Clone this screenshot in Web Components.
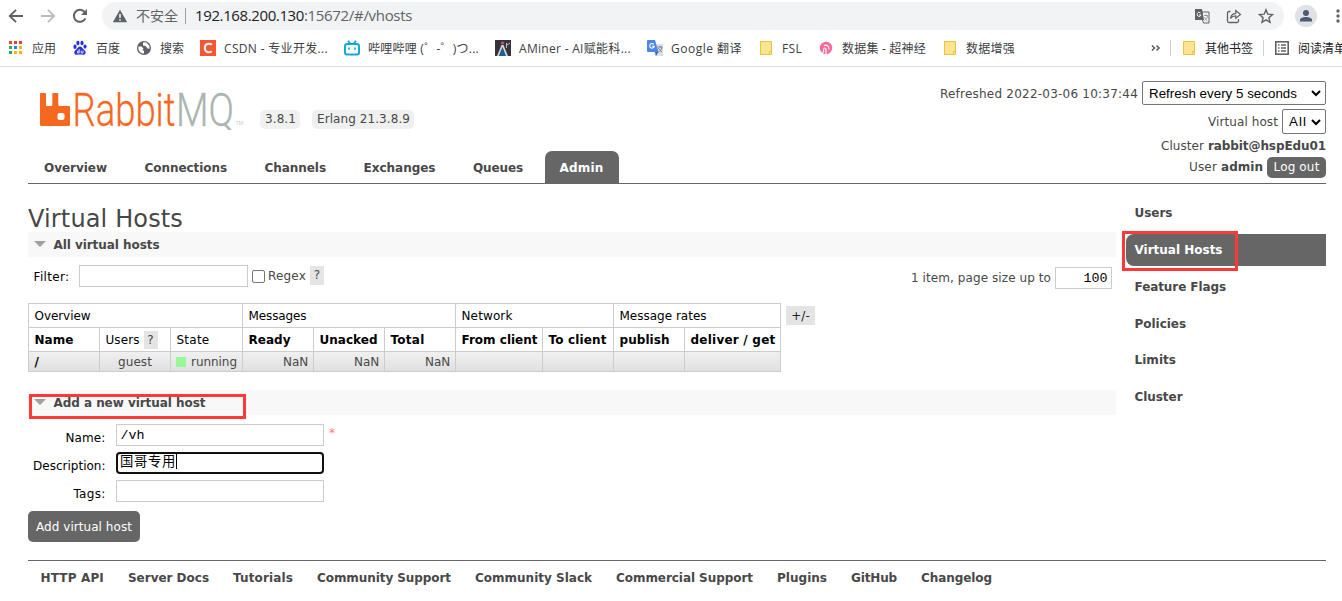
<!DOCTYPE html>
<html lang="zh-CN">
<head>
<meta charset="utf-8">
<title>RabbitMQ Management</title>
<style>
  html, body { margin: 0; padding: 0; }
  body {
    width: 1342px;
    height: 601px;
    overflow: hidden;
    background: #fff;
    color: #484848;
    font: 12px/16px "DejaVu Sans", "Noto Sans CJK SC", sans-serif;
  }
</style>
</head>
<body>
<browser-bar></browser-bar>
<rabbit-header></rabbit-header>
<rabbit-page></rabbit-page>
<rabbit-footer></rabbit-footer>

<script>
const icons = {
  back: '<path d="M15 8H2M8 1.8 1.8 8 8 14.2" fill="none" stroke="#5f6368" stroke-width="1.9"/>',
  forward: '<path d="M1 8h13M8 1.8 14.2 8 8 14.2" fill="none" stroke="#babcbe" stroke-width="1.9"/>',
  reload: '<path d="M13.4 10.3A6 6 0 1 1 12.6 4" fill="none" stroke="#5f6368" stroke-width="2"/><path d="M15 1v6H9z" fill="#5f6368"/>',
  warning: '<path d="M8 1.7 15.2 14.3H.8z" fill="#5f6368"/><path d="M7.2 6h1.6v4H7.2zM7.2 11.2h1.6v1.5H7.2z" fill="#f1f3f4"/>',
  apps: '<path d="M1 1h3v3H1zM6 1h3v3H6zM11 1h3v3h-3z" fill="#ea4335"/><path d="M1 6h3v3H1zM1 11h3v3H1z" fill="#34a853"/><path d="M6 6h3v3H6z" fill="#1a86f0"/><path d="M11 6h3v3h-3zM6 11h3v3H6zM11 11h3v3h-3z" fill="#fbb30b"/>',
  baidu: '<g fill="#2932e1"><ellipse cx="3" cy="6.8" rx="1.6" ry="2.2"/><ellipse cx="5.9" cy="3" rx="1.6" ry="2.2"/><ellipse cx="10" cy="3" rx="1.6" ry="2.2"/><ellipse cx="13" cy="6.6" rx="1.6" ry="2.1"/><path d="M8 6.5c2 0 2.5 2 4 3.2 3 2.4 1.5 5.3-1 5-2-.3-4-.3-6 0-2.6.3-4-2.7-1-5C5.500 8.500 6 6.500 8 6.500z"/></g><path d="M7.200 9v4H5.500v-2h1.700M9.200 10.500V13H11v-2.500" fill="none" stroke="#fff" stroke-width=".8"/>',
  globe: '<circle cx="8" cy="8" r="7" fill="#5f6368"/><path d="M2.5 6.500h3l2 2-1 1.500 1.500 1v2.600C4 13.500 1.800 10 2.500 6.500zM7 2.500l3-.2 3.400 3.500.2 3-2-.3-2-2.500-2.600-.5z" fill="#fff"/>',
  csdn: '<path d="M0 0h16v16H0z" fill="#fc5531"/><path d="M12 4.800C9 2.500 4.800 4 4.800 8s4 5.500 7 3.200" fill="none" stroke="#fff" stroke-width="2"/>',
  bili: '<path d="m4 .8 2.200 2.700M12 .8 9.800 3.500" stroke="#10a9dc" stroke-width="1.900"/><rect x="1" y="4" width="14" height="10.500" rx="2" fill="#fff" stroke="#10a9dc" stroke-width="2"/><path d="M5 7.500v2.200M11 7.500v2.200" stroke="#10a9dc" stroke-width="1.600"/>',
  aminer: '<path d="M0 0h16v16H0z" fill="#373435"/><path d="m2 16 4.500-11h2L13 16h-2.200L7.500 7 4 16z" fill="#c8d7e3"/><path d="m7.500 8 3 8h-6z" fill="#1661a4"/><circle cx="7.500" cy="3" r="1.500" fill="#db4b87"/><path d="M11.500 8V3M12 5l3-2" stroke="#bbb"/>',
  translate: '<path d="M5 4h11v12H8z" fill="#dcdfe2"/><path d="M1 0h7l3.500 12H1a1 1 0 0 1-1-1V1a1 1 0 0 1 1-1z" fill="#4a86e8"/><path d="m8 12 3.500 0L9 16z" fill="#3367c7"/><path d="M6.800 4.300A2.300 2.300 0 1 0 7.300 6.200H5" fill="none" stroke="#fff" stroke-width="1.100"/><path d="M10.500 7h5M13 6v1M15 7c-.5 3-2 4-3.500 5M11.500 8c1 2 2 3 3.500 4" fill="none" stroke="#777f88"/>',
  folder: '<path d="M2.500 1.500h11v13h-11z" fill="#ffe58f" stroke="#e9c341"/><path d="M11.500 14.500v-3h2" fill="none" stroke="#e9c341"/>',
  hyper: '<circle cx="8" cy="8" r="6.200" fill="#ff6b98"/><path d="M4.500 13c2-1 .5-3 1.500-4.500S8.500 9 8 11v4M6 5.500c2.500-1 5 .5 5 4" stroke="#fff" fill="none" stroke-width="1.100"/>',
  gtrans: '<path d="M1 1h7l2 11H1z" fill="#5f6368"/><path d="M8 4h7v11H9.500l-1-3" fill="none" stroke="#5f6368"/><path d="M6.500 5A2 2 0 1 0 7 7H5" fill="none" stroke="#fff" stroke-width=".9"/><path d="M10 7.500h4M12 6.500v1M13.500 8c0 2-1.500 3.500-3 4.500M10.500 9c1 2 1.500 2.500 3 3.500" fill="none" stroke="#8d9196" stroke-width=".9"/>',
  share: '<path d="M4.500 3.500H3a1.500 1.500 0 0 0-1.500 1.500v8A1.500 1.500 0 0 0 3 14.500h8a1.500 1.500 0 0 0 1.500-1.500v-2" fill="none" stroke="#5f6368" stroke-width="1.300"/><path d="M4.500 10.500C5 7 7 5.500 9.800 5.300V2.600L14.500 6.500 9.800 10.300V7.800C7.500 7.800 6 8.500 4.500 10.500z" fill="none" stroke="#5f6368" stroke-width="1.200"/>',
  star: '<path d="m8 1.800 1.800 4.400 4.700.4-3.600 3.100 1.100 4.600L8 11.800l-4 2.500 1.100-4.600-3.600-3.100 4.700-.4z" fill="none" stroke="#5f6368" stroke-width="1.400"/>',
  list: '<rect x="1.800" y="1.800" width="12.400" height="12.400" fill="none" stroke="#5f6368" stroke-width="1.600"/><path d="M4 5h1.500M4 8h1.500M4 11h1.500M7 5h5M7 8h5M7 11h5" stroke="#5f6368" stroke-width="1.300"/>',
  more: '<path d="M2.500 5.500 5 8l-2.500 2.500M7 5.500 9.500 8 7 10.500" fill="none" stroke="#5f6368" stroke-width="1.700" transform="translate(1.500)"/>'
};

class UiIcon extends HTMLElement {
  connectedCallback() {
    this.attachShadow({mode: 'open'}).innerHTML = `
      <style>
        :host { display: block; flex: none; width: 16px; height: 16px; }
        svg { display: block; width: 100%; height: 100%; }
      </style>
      <svg viewBox="0 0 16 16">${icons[this.getAttribute('name')]}</svg>`;
  }
}
customElements.define('ui-icon', UiIcon);

// Single line of text spaced out to the width given in the w attribute
class FitText extends HTMLElement {
  connectedCallback() {
    if (!this.shadowRoot) {
      this.attachShadow({mode: 'open'}).innerHTML = `
        <style>
          :host { display: inline-block; white-space: nowrap; flex: none; }
        </style>
        <slot></slot>`;
    }
    const w = parseFloat(this.getAttribute('w'));
    const n = [...this.textContent].length;
    const natural = this.getBoundingClientRect().width;
    this.style.letterSpacing = (w - natural) / n + 'px';
    this.style.width = w + 'px';
  }
}
customElements.define('fit-text', FitText);

class BookmarkItem extends HTMLElement {
  connectedCallback() {
    this.attachShadow({mode: 'open'}).innerHTML = `
      <style>
        :host { display: flex; align-items: center; gap: 8px; flex: none; }
        ::slotted(fit-text) { padding-top: 1px; }
      </style>
      <ui-icon name="${this.getAttribute('icon')}"></ui-icon>
      <slot></slot>`;
  }
}
customElements.define('bookmark-item', BookmarkItem);

class BrowserBar extends HTMLElement {
  connectedCallback() {
    this.attachShadow({mode: 'open'}).innerHTML = `
      <style>
        :host {
          display: block;
          height: 66px;
          overflow: hidden;
          border-bottom: 1px solid #dadce0;
          color: #3c4043;
          font: 12px/18px "Open Sans", "Noto Sans CJK SC", sans-serif;
        }
        .toolbar { display: flex; align-items: center; height: 32px; padding-left: 8px; width: 1334px; }
        .toolbar > ui-icon { margin-right: 16px; }
        .omnibox {
          display: flex;
          align-items: center;
          box-sizing: border-box;
          width: 1182px;
          height: 28px;
          margin-left: -2px;
          padding: 0 10px;
          border-radius: 14px;
          background: #f1f3f4;
          font-size: 15px;
          color: #5f6368;
        }
        .warn { font-size: 14px; margin-left: 8px; }
        .line { width: 1px; height: 16px; background: #9aa0a6; margin: 0 9px 0 7px; }
        .url { display: flex; padding-bottom: 2px; }
        .host { color: #202124; }
        .tools { display: flex; gap: 16px; margin-left: auto; }
        .avatar { width: 22px; height: 22px; flex: none; margin-left: 11px; }
        .dots { width: 4px; height: 14px; flex: none; margin-left: 19px; }
        .bookmarks { display: flex; align-items: center; gap: 16px; height: 32px; padding-left: 8px; width: 1342px; }
        .rest { display: flex; align-items: center; margin-left: 133px; color: #202124; }
        .sep { width: 1px; height: 16px; background: #cdd0d4; }
      </style>
      <div class="toolbar">
        <ui-icon name="back"></ui-icon>
        <ui-icon name="forward"></ui-icon>
        <ui-icon name="reload"></ui-icon>
        <div class="omnibox">
          <ui-icon name="warning"></ui-icon>
          <fit-text class="warn" w="42">不安全</fit-text>
          <span class="line"></span>
          <div class="url"><fit-text class="host" w="109">192.168.200.130</fit-text><fit-text w="108">:15672/#/vhosts</fit-text></div>
          <div class="tools">
            <ui-icon name="gtrans"></ui-icon>
            <ui-icon name="share"></ui-icon>
            <ui-icon name="star"></ui-icon>
          </div>
        </div>
        <svg class="avatar" viewBox="0 0 22 22"><circle cx="11" cy="11" r="11" fill="#dee1e6"/><circle cx="11" cy="8" r="3" fill="#4d5a72"/><path d="M5 16.500v-1.500c0-2 3-3 6-3s6 1 6 3v1.500z" fill="#4d5a72"/></svg>
        <svg class="dots" viewBox="0 0 4 14"><g fill="#5f6368"><circle cx="2" cy="2" r="1.700"/><circle cx="2" cy="7" r="1.700"/><circle cx="2" cy="12" r="1.700"/></g></svg>
      </div>
      <div class="bookmarks">
        <bookmark-item icon="apps"><fit-text w="24">应用</fit-text></bookmark-item>
        <bookmark-item icon="baidu"><fit-text w="24">百度</fit-text></bookmark-item>
        <bookmark-item icon="globe"><fit-text w="24">搜索</fit-text></bookmark-item>
        <bookmark-item icon="csdn"><fit-text w="104">CSDN - 专业开发...</fit-text></bookmark-item>
        <bookmark-item icon="bili"><fit-text w="111">哔哩哔哩 (゜-゜)つ...</fit-text></bookmark-item>
        <bookmark-item icon="aminer"><fit-text w="112">AMiner - AI赋能科...</fit-text></bookmark-item>
        <bookmark-item icon="translate"><fit-text w="71">Google 翻译</fit-text></bookmark-item>
        <bookmark-item icon="folder"><fit-text w="20">FSL</fit-text></bookmark-item>
        <bookmark-item icon="hyper"><fit-text w="84">数据集 - 超神经</fit-text></bookmark-item>
        <bookmark-item icon="folder"><fit-text w="49">数据增强</fit-text></bookmark-item>
        <div class="rest">
          <ui-icon name="more" style="margin-left:-16px"></ui-icon>
          <span class="sep" style="margin:0 10px 0 6px"></span>
          <bookmark-item icon="folder"><fit-text w="48">其他书签</fit-text></bookmark-item>
          <span class="sep" style="margin:0 10px"></span>
          <bookmark-item icon="list"><fit-text w="48">阅读清单</fit-text></bookmark-item>
        </div>
      </div>`;
  }
}
customElements.define('browser-bar', BrowserBar);

class RabbitLogo extends HTMLElement {
  connectedCallback() {
    this.attachShadow({mode: 'open'}).innerHTML = `
      <style>
        :host { display: block; width: 204px; height: 38px; }
        svg { display: block; font-family: Roboto, sans-serif; font-weight: 300; }
      </style>
      <svg width="204" height="38" viewBox="0 0 204 38">
        <path fill="#f66820" fill-rule="evenodd" d="M1 1h4q1 0 1 1v11q0 1 1 1h4.300q1 0 1-1V2q0-1 1-1h4q1 0 1 1v11q0 1 1 1H29q1 0 1 1v17.500q0 1.500-1.500 1.500h-27Q0 34 0 32.500V2q0-1 1-1zM19.500 21q-2 0-2 2v3q0 2 2 2h3q2 0 2-2v-3q0-2-2-2z"/>
        <text x="32.500" y="33.500" font-size="46" textLength="103" lengthAdjust="spacingAndGlyphs" fill="#f66820" stroke="#f66820" stroke-width=".3">Rabbit</text>
        <text x="136" y="33.500" font-size="46" textLength="58" lengthAdjust="spacingAndGlyphs" fill="#a9b5b0" stroke="#a9b5b0" stroke-width=".3">MQ</text>
        <text x="195.500" y="33" font-size="5.500" textLength="8" lengthAdjust="spacingAndGlyphs" fill="#a9b5b0">TM</text>
      </svg>`;
  }
}
customElements.define('rabbit-logo', RabbitLogo);

class SelectBox extends HTMLElement {
  connectedCallback() {
    this.attachShadow({mode: 'open'}).innerHTML = `
      <style>
        :host {
          display: flex;
          align-items: center;
          justify-content: space-between;
          box-sizing: border-box;
          padding: 0 4px 0 6px;
          border: 1px solid #767676;
          border-radius: 2px;
          background: #fff;
          color: #000;
          font: 13.33px/16px "Liberation Sans", Arial, sans-serif;
        }
        ::slotted(fit-text) { padding-top: 1px; }
      </style>
      <slot></slot>
      <svg width="10" height="8" viewBox="0 0 10 8"><path d="M1 2l4 4 4-4" fill="none" stroke="#000" stroke-width="2"/></svg>`;
  }
}
customElements.define('select-box', SelectBox);

class RabbitHeader extends HTMLElement {
  connectedCallback() {
    this.attachShadow({mode: 'open'}).innerHTML = `
      <style>
        :host {
          display: flex;
          justify-content: space-between;
          box-sizing: border-box;
          width: 1298px;
          height: 117px;
          margin-left: 28px;
          border-bottom: 1px solid #666;
        }
        .brand { display: flex; align-items: flex-end; height: 62px; padding-left: 12px; }
        .brand rabbit-logo { margin-bottom: -1px; }
        .tag {
          margin-right: 12px;
          padding: 1px 4px 2px 5px;
          border-radius: 5px;
          background: #f0f0f0;
        }
        .tag:first-of-type { margin-left: 16px; }
        nav { display: flex; margin-top: 22px; font-weight: bold; }
        nav a { height: 32px; line-height: 34px; padding: 0 16px; margin-right: 5.500px; }
        nav a.on { padding: 0 15px; border-radius: 7px 7px 0 0; background: #666; color: #fff; }
        .user { display: flex; flex-direction: column; align-items: flex-end; padding-top: 14px; }
        .user div { display: flex; align-items: center; gap: 4px; }
        .logout { width: 59px; height: 21px; line-height: 20px; text-align: center; border-radius: 5px; background: #666; color: #fff; }
      </style>
      <div>
        <div class="brand">
          <rabbit-logo></rabbit-logo>
          <span class="tag"><fit-text w="31">3.8.1</fit-text></span>
          <span class="tag"><fit-text w="93">Erlang 21.3.8.9</fit-text></span>
        </div>
        <nav>
          <a><fit-text w="63">Overview</fit-text></a>
          <a><fit-text w="82.500">Connections</fit-text></a>
          <a><fit-text w="61.500">Channels</fit-text></a>
          <a><fit-text w="72">Exchanges</fit-text></a>
          <a><fit-text w="50">Queues</fit-text></a>
          <a class="on"><fit-text w="44">Admin</fit-text></a>
        </nav>
      </div>
      <div class="user">
        <div style="height:24px"><fit-text w="198" style="padding-top:2px">Refreshed 2022-03-06 10:37:44</fit-text><select-box style="width:184px;height:24px"><fit-text w="148">Refresh every 5 seconds</fit-text></select-box></div>
        <div style="height:25px;margin-top:4px"><fit-text w="70">Virtual host</fit-text><select-box style="width:44px;height:25px"><fit-text w="18">All</fit-text></select-box></div>
        <div style="height:22px;margin-top:1px"><fit-text w="43">Cluster</fit-text><b><fit-text w="118">rabbit@hspEdu01</fit-text></b></div>
        <div style="height:22px;margin-top:-1px"><fit-text w="28">User</fit-text><b><fit-text w="42">admin</fit-text></b><span class="logout"><fit-text w="46">Log out</fit-text></span></div>
      </div>`;
  }
}
customElements.define('rabbit-header', RabbitHeader);

class SectionBar extends HTMLElement {
  connectedCallback() {
    this.attachShadow({mode: 'open'}).innerHTML = `
      <style>
        :host {
          display: flex;
          align-items: center;
          box-sizing: border-box;
          height: 25px;
          padding: 0 0 1px 6px;
          background: #f8f8f8;
          font-weight: bold;
        }
        i { border: 6px solid transparent; border-top-color: #a0a0a0; border-bottom: 0; margin-right: 7.500px; }
        ::slotted(fit-text) { padding-top: 2px; }
      </style>
      <i></i><slot></slot>`;
  }
}
customElements.define('section-bar', SectionBar);

class VhostTable extends HTMLElement {
  connectedCallback() {
    this.attachShadow({mode: 'open'}).innerHTML = `
      <style>
        :host { display: flex; align-items: flex-start; gap: 5px; }
        table { border-collapse: collapse; table-layout: fixed; width: 753px; }
        td, th {
          box-sizing: border-box;
          height: 24px;
          padding: 0 0 0 5.500px;
          border: 1px solid #ccc;
          color: #000;
          text-align: left;
          line-height: 18px;
          font-weight: normal;
          white-space: nowrap;
        }
        th { font-weight: bold; }
        .row { background: linear-gradient(#f0f0f0, #dfdfdf); }
        .row td { height: 20px; color: #484848; }
        .row td.n { text-align: right; padding-right: 5px; }
        .sq { display: inline-block; width: 10px; height: 10px; margin-right: 5px; background: #98f898; vertical-align: -1px; }
        .help { display: inline-block; width: 14px; margin-left: 4px; background: #e4e4e4; text-align: center; color: #444; }
        .pm { width: 29px; height: 19px; line-height: 20px; margin-top: 3px; background: #e4e4e4; text-align: center; color: #222; }
      </style>
      <table>
        <colgroup><col width="71"><col width="71"><col width="72"><col width="71"><col width="71"><col width="71"><col width="87"><col width="71"><col width="71"><col width="96"></colgroup>
        <tr>
          <td colspan="3"><fit-text w="56">Overview</fit-text></td>
          <td colspan="3"><fit-text w="58">Messages</fit-text></td>
          <td colspan="2"><fit-text w="51">Network</fit-text></td>
          <td colspan="2"><fit-text w="87">Message rates</fit-text></td>
        </tr>
        <tr>
          <th><fit-text w="39">Name</fit-text></th>
          <td><fit-text w="34">Users</fit-text><span class="help">?</span></td>
          <td><fit-text w="33">State</fit-text></td>
          <th><fit-text w="42">Ready</fit-text></th>
          <th><fit-text w="58">Unacked</fit-text></th>
          <th><fit-text w="34">Total</fit-text></th>
          <th><fit-text w="76">From client</fit-text></th>
          <th><fit-text w="58">To client</fit-text></th>
          <th><fit-text w="50">publish</fit-text></th>
          <th><fit-text w="85">deliver / get</fit-text></th>
        </tr>
        <tr class="row">
          <td style="color:#000"><b>/</b></td>
          <td style="text-align:center;padding:0"><fit-text w="34">guest</fit-text></td>
          <td style="padding-left:5px"><span class="sq"></span><fit-text w="46">running</fit-text></td>
          <td class="n"><fit-text w="25">NaN</fit-text></td>
          <td class="n"><fit-text w="25">NaN</fit-text></td>
          <td class="n"><fit-text w="25">NaN</fit-text></td>
          <td></td><td></td><td></td><td></td>
        </tr>
      </table>
      <div class="pm">+/-</div>`;
  }
}
customElements.define('vhost-table', VhostTable);

class TextField extends HTMLElement {
  connectedCallback() {
    this.attachShadow({mode: 'open'}).innerHTML = `
      <style>
        :host {
          display: block;
          box-sizing: border-box;
          width: 208px;
          height: 22px;
          padding: 0 3.500px;
          border: 1px solid #ccc;
          background: #fff;
          color: #000;
          font: 13.33px/22px "Liberation Mono", "Noto Sans CJK SC", monospace;
        }
        :host([focused]) { padding: 0 2px; border: 2px solid #101010; border-radius: 4px; line-height: 18px; }
        :host([focused])::after { content: ""; display: inline-block; width: 1px; height: 15px; background: #000; vertical-align: -3px; }
      </style>
      <slot></slot>`;
  }
}
customElements.define('text-field', TextField);

class SideMenu extends HTMLElement {
  connectedCallback() {
    this.attachShadow({mode: 'open'}).innerHTML = `
      <style>
        :host { display: flex; flex-direction: column; gap: 4.850px; width: 200px; margin-left: 10px; padding-top: 13px; font-weight: bold; }
        a { position: relative; height: 32px; line-height: 33px; padding-left: 8.500px; border-radius: 8px 0 0 8px; }
        a.on { background: #666; color: #fff; }
        /* marker frame over the current entry */
        a.on::after { content: ""; position: absolute; left: -4px; top: -3px; width: 110px; height: 34px; border: 3px solid #ff3838; }
      </style>
      <a><fit-text w="38">Users</fit-text></a>
      <a class="on"><fit-text w="88">Virtual Hosts</fit-text></a>
      <a><fit-text w="91.500">Feature Flags</fit-text></a>
      <a><fit-text w="51.500">Policies</fit-text></a>
      <a><fit-text w="41.500">Limits</fit-text></a>
      <a><fit-text w="48">Cluster</fit-text></a>`;
  }
}
customElements.define('side-menu', SideMenu);

class RabbitPage extends HTMLElement {
  connectedCallback() {
    this.attachShadow({mode: 'open'}).innerHTML = `
      <style>
        :host { display: flex; width: 1298px; height: 376px; margin-left: 28px; }
        main { width: 1088px; padding-top: 20px; }
        h1 { margin: 0; height: 28px; font: 24px/30px "DejaVu Sans", sans-serif; }
        .filter { display: flex; align-items: center; height: 46px; padding-left: 5.500px; }
        .black { color: #000; }
        .box { box-sizing: border-box; width: 13px; height: 13px; margin: 0 3px 0 4px; border: 1px solid #767676; border-radius: 2px; }
        .help { width: 14px; height: 19px; line-height: 19px; margin-left: 4px; background: #e4e4e4; text-align: center; }
        .pages { display: flex; align-items: center; gap: 4px; margin: 4px 4px 0 auto; }
        .add { position: relative; margin-top: 18px; }
        /* marker frame over the section title */
        .add::after { content: ""; position: absolute; left: 1px; top: 4px; width: 211px; height: 19px; border: 3px solid #ff3838; }
        .form { display: grid; grid-template-columns: 77.500px 208px auto; column-gap: 10.500px; row-gap: 6px; margin-top: 9px; }
        .form label { color: #000; text-align: right; padding-top: 6px; height: 16px; }
        .star { color: #f77; margin-left: -5.500px; line-height: 19px; height: 22px; }
        .btn { width: 112px; height: 31px; line-height: 32px; margin-top: 9px; text-align: center; border-radius: 5px; background: #666; color: #fff; }
      </style>
      <main>
        <h1><fit-text w="155">Virtual Hosts</fit-text></h1>
        <section-bar><fit-text w="106">All virtual hosts</fit-text></section-bar>
        <div class="filter">
          <fit-text class="black" w="36" style="margin-top:-6px">Filter:</fit-text>
          <text-field style="width:169px;margin:-8px 0 0 9.500px"></text-field>
          <span class="box" style="margin-top:-7px"></span>
          <fit-text w="38" style="margin-top:-8px">Regex</fit-text>
          <span class="help" style="margin-top:-9px">?</span>
          <div class="pages" style="margin-top:-4px">
            <fit-text w="140">1 item, page size up to</fit-text>
            <text-field style="width:57px;text-align:right">100</text-field>
          </div>
        </div>
        <vhost-table></vhost-table>
        <section-bar class="add"><fit-text w="152">Add a new virtual host</fit-text></section-bar>
        <div class="form">
          <label><fit-text w="40">Name:</fit-text></label>
          <text-field>/vh</text-field>
          <span class="star">*</span>
          <label><fit-text w="72.500">Description:</fit-text></label>
          <text-field focused><fit-text w="56">国哥专用</fit-text></text-field>
          <span></span>
          <label><fit-text w="32">Tags:</fit-text></label>
          <text-field></text-field>
        </div>
        <div class="btn"><fit-text w="96">Add virtual host</fit-text></div>
      </main>
      <side-menu></side-menu>`;
  }
}
customElements.define('rabbit-page', RabbitPage);

class RabbitFooter extends HTMLElement {
  connectedCallback() {
    this.attachShadow({mode: 'open'}).innerHTML = `
      <style>
        :host {
          display: flex;
          gap: 24px;
          box-sizing: border-box;
          width: 1298px;
          margin-left: 28px;
          padding: 9px 0 0 12.500px;
          border-top: 1px solid #666;
          font-weight: bold;
        }
      </style>
      <fit-text w="63.500">HTTP API</fit-text>
      <fit-text w="81">Server Docs</fit-text>
      <fit-text w="60">Tutorials</fit-text>
      <fit-text w="134">Community Support</fit-text>
      <fit-text w="117">Community Slack</fit-text>
      <fit-text w="137">Commercial Support</fit-text>
      <fit-text w="50">Plugins</fit-text>
      <fit-text w="46">GitHub</fit-text>
      <fit-text w="71">Changelog</fit-text>`;
  }
}
customElements.define('rabbit-footer', RabbitFooter);
</script>
</body>
</html>
